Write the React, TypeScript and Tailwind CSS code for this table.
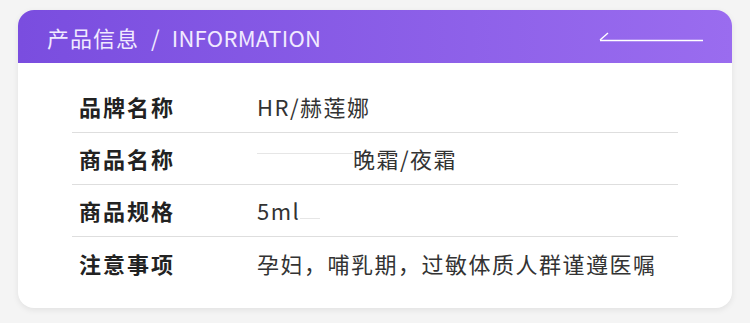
import React from 'react';

const rows = [
  { label: '品牌名称', value: 'HR/赫莲娜' },
  { label: '商品名称', value: '晚霜/夜霜', blank: 'name' },
  { label: '商品规格', value: '5ml', blank: 'spec' },
  { label: '注意事项', value: '孕妇，哺乳期，过敏体质人群谨遵医嘱' },
];

export default function App() {
  return (
    <div className="w-[750px] h-[323px] bg-[#f4f4f4] pt-[10px] px-[18px] font-['Noto_Sans_CJK_SC','Noto_Sans',sans-serif]">
      <div className="bg-white rounded-[16px] shadow-[0_2px_6px_rgba(0,0,0,0.08)] h-[298px] overflow-hidden">
        {/* header */}
        <div className="h-[53px] flex items-center justify-between pl-[29px] pr-[28px] bg-gradient-to-r from-[#7a4ddf] to-[#9a6cef]">
          <div className="flex items-center gap-[12px] text-[22px] text-[#f1eaff] leading-none">
            <span className="tracking-[1px]">产品信息</span>
            <span>/</span>
            <span className="tracking-[0.3px]">INFORMATION</span>
          </div>
          <svg width="106" height="12" viewBox="0 0 106 12" className="mt-[1px]">
            <path d="M2 9 L10 2" stroke="#ffffff" strokeWidth="1.4" fill="none" />
            <path d="M2 9.5 H105" stroke="#ffffff" strokeWidth="1.6" fill="none" />
          </svg>
        </div>

        {/* rows */}
        <div className="mx-[54px] pt-[18px]">
          {rows.map((row, i) => (
            <div
              key={i}
              className={`h-[52px] flex items-center ${i < rows.length - 1 ? 'border-b border-[#dedede]' : ''}`}
            >
              <div className="w-[185px] pl-[7px] text-[22px] font-semibold tracking-[2px] text-[#222222]">
                {row.label}
              </div>
              <div className="flex items-center text-[22px] tracking-[1.5px] text-[#333333]">
                {row.blank === 'name' && (
                  <span className="w-[96px] h-[20px] border-t border-[#e6e6e6] mt-[8px]" />
                )}
                <span>{row.value}</span>
                {row.blank === 'spec' && (
                  <span className="w-[20px] h-[1px] bg-[#e6e6e6] mt-[16px]" />
                )}
              </div>
            </div>
          ))}
        </div>
      </div>
    </div>
  );
}
